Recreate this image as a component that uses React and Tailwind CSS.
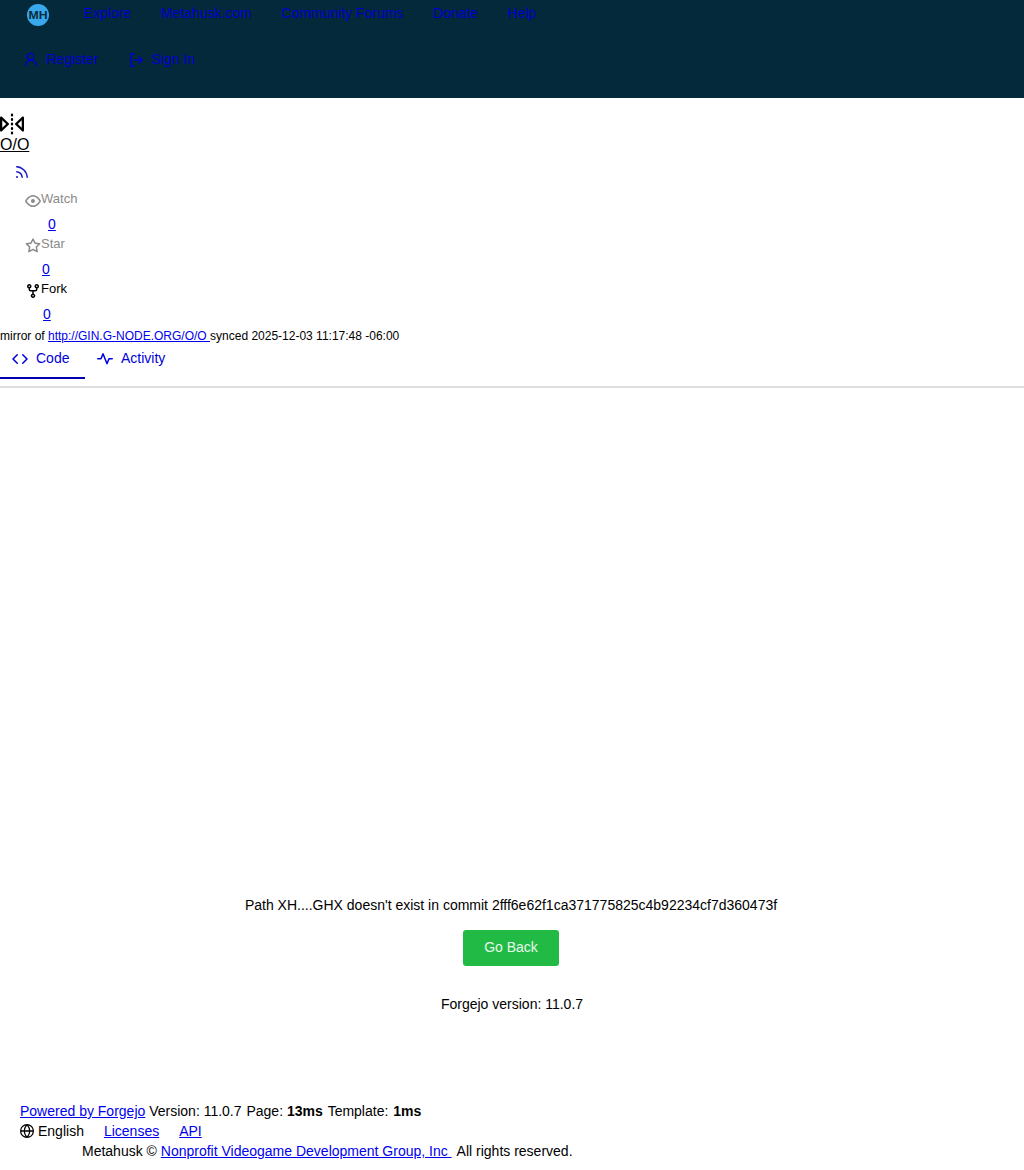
// App.jsx
function Octicon({ d, size = 16, className = '' }) {
  return (
    <svg viewBox="0 0 16 16" width={size} height={size} fill="currentColor" className={`shrink-0 ${className}`}>
      <path fillRule="evenodd" d={d} />
    </svg>
  );
}

const icons = {
  person: 'M10.561 8.073a6 6 0 0 1 3.432 5.142.75.75 0 1 1-1.498.07 4.5 4.5 0 0 0-8.99 0 .75.75 0 0 1-1.498-.07 6 6 0 0 1 3.431-5.142 3.999 3.999 0 1 1 4.123 0M10.5 4.5a2.5 2.5 0 1 0-5 0 2.5 2.5 0 0 0 5 0',
  signIn: 'M2 2.75C2 1.784 2.784 1 3.75 1h2.5a.75.75 0 0 1 0 1.5h-2.5a.25.25 0 0 0-.25.25v10.5c0 .138.112.25.25.25h2.5a.75.75 0 0 1 0 1.5h-2.5A1.75 1.75 0 0 1 2 13.25Zm10.44 4.5-1.97-1.97a.749.749 0 0 1 .326-1.275.749.749 0 0 1 .734.215l3.25 3.25a.75.75 0 0 1 0 1.06l-3.25 3.25a.749.749 0 0 1-1.275-.326.749.749 0 0 1 .215-.734l1.97-1.97H6.75a.75.75 0 0 1 0-1.5Z',
  mirror: 'M15.547 3.061A.75.75 0 0 1 16 3.75v8.5a.751.751 0 0 1-1.265.545l-4.5-4.25a.75.75 0 0 1 0-1.09l4.5-4.25a.75.75 0 0 1 .812-.144M0 12.25v-8.5a.751.751 0 0 1 1.265-.545l4.5 4.25a.75.75 0 0 1 0 1.09l-4.5 4.25A.75.75 0 0 1 0 12.25m1.5-6.76v5.02L4.158 8ZM11.842 8l2.658 2.51V5.49ZM8 4a.75.75 0 0 1 .75.75v.5a.75.75 0 0 1-1.5 0v-.5A.75.75 0 0 1 8 4m.75-2.25v.5a.75.75 0 0 1-1.5 0v-.5a.75.75 0 0 1 1.5 0m0 6v.5a.75.75 0 0 1-1.5 0v-.5a.75.75 0 0 1 1.5 0M8 10a.75.75 0 0 1 .75.75v.5a.75.75 0 0 1-1.5 0v-.5A.75.75 0 0 1 8 10m0 3a.75.75 0 0 1 .75.75v.5a.75.75 0 0 1-1.5 0v-.5A.75.75 0 0 1 8 13',
  rss: 'M2.002 2.725a.75.75 0 0 1 .797-.699C8.79 2.42 13.58 7.21 13.974 13.201a.75.75 0 0 1-1.497.098 10.5 10.5 0 0 0-9.776-9.776.747.747 0 0 1-.7-.798ZM2.84 7.05h-.002a7 7 0 0 1 6.113 6.111.75.75 0 0 1-1.49.178 5.5 5.5 0 0 0-4.8-4.8.75.75 0 0 1 .179-1.489M2 13a1 1 0 1 1 2 0 1 1 0 0 1-2 0',
  eye: 'M8 2c1.981 0 3.671.992 4.933 2.078 1.27 1.091 2.187 2.345 2.637 3.023a1.62 1.62 0 0 1 0 1.798c-.45.678-1.367 1.932-2.637 3.023C11.67 13.008 9.981 14 8 14s-3.671-.992-4.933-2.078C1.797 10.83.88 9.576.43 8.898a1.62 1.62 0 0 1 0-1.798c.45-.677 1.367-1.931 2.637-3.022C4.33 2.992 6.019 2 8 2M1.679 7.932a.12.12 0 0 0 0 .136c.411.622 1.241 1.75 2.366 2.717C5.176 11.758 6.527 12.5 8 12.5s2.825-.742 3.955-1.715c1.124-.967 1.954-2.096 2.366-2.717a.12.12 0 0 0 0-.136c-.412-.621-1.242-1.75-2.366-2.717C10.824 4.242 9.473 3.5 8 3.5s-2.825.742-3.955 1.715c-1.124.967-1.954 2.096-2.366 2.717M8 10a2 2 0 1 1-.001-3.999A2 2 0 0 1 8 10',
  star: 'M8 .25a.75.75 0 0 1 .673.418l1.882 3.815 4.21.612a.75.75 0 0 1 .416 1.279l-3.046 2.97.719 4.192a.751.751 0 0 1-1.088.791L8 12.347l-3.766 1.98a.75.75 0 0 1-1.088-.79l.72-4.194L.818 6.374a.75.75 0 0 1 .416-1.28l4.21-.611L7.327.668A.75.75 0 0 1 8 .25m0 2.445L6.615 5.5a.75.75 0 0 1-.564.41l-3.097.45 2.24 2.184a.75.75 0 0 1 .216.664l-.528 3.084 2.769-1.456a.75.75 0 0 1 .698 0l2.77 1.456-.53-3.084a.75.75 0 0 1 .216-.664l2.24-2.183-3.096-.45a.75.75 0 0 1-.564-.41z',
  fork: 'M5 5.372v.878c0 .414.336.75.75.75h4.5a.75.75 0 0 0 .75-.75v-.878a2.25 2.25 0 1 1 1.5 0v.878a2.25 2.25 0 0 1-2.25 2.25h-1.5v2.128a2.251 2.251 0 1 1-1.5 0V8.5h-1.5A2.25 2.25 0 0 1 3.5 6.25v-.878a2.25 2.25 0 1 1 1.5 0M5 3.25a.75.75 0 1 0-1.5 0 .75.75 0 0 0 1.5 0m6.75.75a.75.75 0 1 0 0-1.5.75.75 0 0 0 0 1.5m-3 8.75a.75.75 0 1 0-1.5 0 .75.75 0 0 0 1.5 0',
  code: 'm11.28 3.22 4.25 4.25a.75.75 0 0 1 0 1.06l-4.25 4.25a.749.749 0 0 1-1.275-.326.75.75 0 0 1 .215-.734L13.94 8l-3.72-3.72a.749.749 0 0 1 .326-1.275.75.75 0 0 1 .734.215m-6.56 0a.75.75 0 0 1 1.042.018.75.75 0 0 1 .018 1.042L2.06 8l3.72 3.72a.749.749 0 0 1-.326 1.275.75.75 0 0 1-.734-.215L.47 8.53a.75.75 0 0 1 0-1.06Z',
  pulse: 'M6 2c.306 0 .582.187.696.471L10 10.731l1.304-3.26A.75.75 0 0 1 12 7h3.25a.75.75 0 0 1 0 1.5h-2.742l-1.812 4.528a.751.751 0 0 1-1.392 0L6 4.77 4.696 8.03A.75.75 0 0 1 4 8.5H.75a.75.75 0 0 1 0-1.5h2.742l1.812-4.529A.75.75 0 0 1 6 2',
  globe: 'M8 0a8 8 0 1 1 0 16A8 8 0 0 1 8 0M5.78 8.75a9.6 9.6 0 0 0 1.363 4.177q.383.64.857 1.215c.245-.296.551-.705.857-1.215A9.6 9.6 0 0 0 10.22 8.75Zm4.44-1.5a9.6 9.6 0 0 0-1.363-4.177c-.307-.51-.612-.919-.857-1.215a10 10 0 0 0-.857 1.215A9.6 9.6 0 0 0 5.78 7.25Zm-5.944 1.5H1.543a6.51 6.51 0 0 0 4.666 5.5l.122.035a11 11 0 0 1-2.055-5.535m-.002-1.5a11 11 0 0 1 2.057-5.535 6.51 6.51 0 0 0-4.788 5.535Zm7.441 1.5a11 11 0 0 1-2.056 5.535 6.51 6.51 0 0 0 4.798-5.535Zm2.742-1.5a6.51 6.51 0 0 0-4.788-5.535 11 11 0 0 1 2.057 5.535Z',
};

function RepoButton({ icon, label, count, dim, countPad }) {
  return (
    <div className="h-[45px]">
      <div className={`flex items-start h-[25px] pl-[25px] text-[13px] leading-[18px] ${dim ? 'text-[#8a8a8a]' : 'text-black'}`}>
        <Octicon d={icons[icon]} className="mt-[3px]" />
        <span>{label}</span>
      </div>
      <a href="#" className={`block w-fit ${countPad} text-[#0000ee] underline leading-[18px]`}>{count}</a>
    </div>
  );
}

export default function App() {
  return (
    <div className="h-[1170px] flex flex-col bg-white text-[14px] text-black font-['Liberation_Sans',Arial,sans-serif]">
      <header className="h-[98px] bg-[#04293a] text-[#0000cc]">
        <nav className="flex items-center h-[30px] pl-[27px]">
          <svg viewBox="0 0 22 22" width="22" height="22" className="shrink-0">
            <circle cx="11" cy="11" r="11" fill="#38a9ec" />
            <text x="11" y="15" textAnchor="middle" fontSize="11" fontWeight="700" textLength="19" lengthAdjust="spacingAndGlyphs" fill="#04293a">MH</text>
          </svg>
          <div className="flex gap-[29.5px] ml-[34.5px] -mt-[4px]">
            <a href="#">Explore</a>
            <a href="#">Metahusk.com</a>
            <a href="#">Community Forums</a>
            <a href="#">Donate</a>
            <a href="#">Help</a>
          </div>
        </nav>
        <div className="flex mt-[19px] pl-[23px]">
          <a href="#" className="flex items-center gap-[7px]"><Octicon d={icons.person} />Register</a>
          <a href="#" className="flex items-center gap-[7px] ml-[30px]"><Octicon d={icons.signIn} />Sign In</a>
        </div>
      </header>

      <main className="flex-1 flex flex-col">
        <div className="pt-[14px]">
          <div className="h-[24px] text-black"><Octicon d={icons.mirror} size={24} /></div>
          <a href="#" className="block w-fit text-[16px] leading-[18px] underline">O/O</a>
          <a href="#" className="block w-fit ml-[14px] mt-[10px] h-[16px] text-[#1a1acc]"><Octicon d={icons.rss} /></a>
          <div className="mt-[10px]">
            <RepoButton icon="eye" label="Watch" count="0" dim countPad="ml-[48px]" />
            <RepoButton icon="star" label="Star" count="0" dim countPad="ml-[42px]" />
            <RepoButton icon="fork" label="Fork" count="0" countPad="ml-[43px]" />
          </div>
          <div className="text-xs leading-[14px] mt-[4px]">
            mirror of <a href="#" className="text-[#0000ee] underline">http://GIN.G-NODE.ORG/O/O </a> synced 2025-12-03 11:17:48 -06:00
          </div>
        </div>

        <div className="flex h-[45px] border-b-2 border-[#dedede] text-[#0000dd]">
          <a href="#" className="flex items-start pt-[5px] gap-[8px] w-[85px] pl-[12px] h-[36px] border-b-2 border-[#0000b0]">
            <Octicon d={icons.code} className="mt-[3px]" />Code
          </a>
          <a href="#" className="flex items-start pt-[5px] gap-[8px] pl-[12px] h-[36px]">
            <Octicon d={icons.pulse} className="mt-[3px]" />Activity
          </a>
        </div>

        <div className="flex-1 flex flex-col items-center justify-end pb-[88px]">
          <p className="leading-[16px] mr-[2px]">Path XH....GHX doesn't exist in commit 2fff6e62f1ca371775825c4b92234cf7d360473f</p>
          <a href="#" className="flex items-center justify-center mt-[17px] mr-[2px] pb-[2px] w-[96px] h-[36px] rounded-[3px] bg-[#21ba45] text-white/90">Go Back</a>
          <p className="mt-[30px] leading-[16px]">Forgejo version: 11.0.7</p>
        </div>
      </main>

      <footer className="h-[70px] pl-[20px] leading-[20px] pt-[1px]">
        <div>
          <a href="#" className="text-[#0000ee] underline">Powered by Forgejo</a> Version: 11.0.7 <span className="ml-[1px]">Page:</span> <strong>13ms</strong> <span className="ml-[1px]">Template:</span> <strong className="ml-[1px]">1ms</strong>
        </div>
        <div className="flex items-center">
          <Octicon d={icons.globe} size={14} className="mr-[4px]" />
          <span>English</span>
          <a href="#" className="ml-[20px] text-[#0000ee] underline">Licenses</a>
          <a href="#" className="ml-[20px] text-[#0000ee] underline">API</a>
        </div>
        <div className="pl-[62px]">
          Metahusk © <a href="#" className="text-[#0000ee] underline">Nonprofit Videogame Development Group, Inc </a> <span className="ml-[5px]">All rights reserved.</span>
        </div>
      </footer>
    </div>
  );
}
